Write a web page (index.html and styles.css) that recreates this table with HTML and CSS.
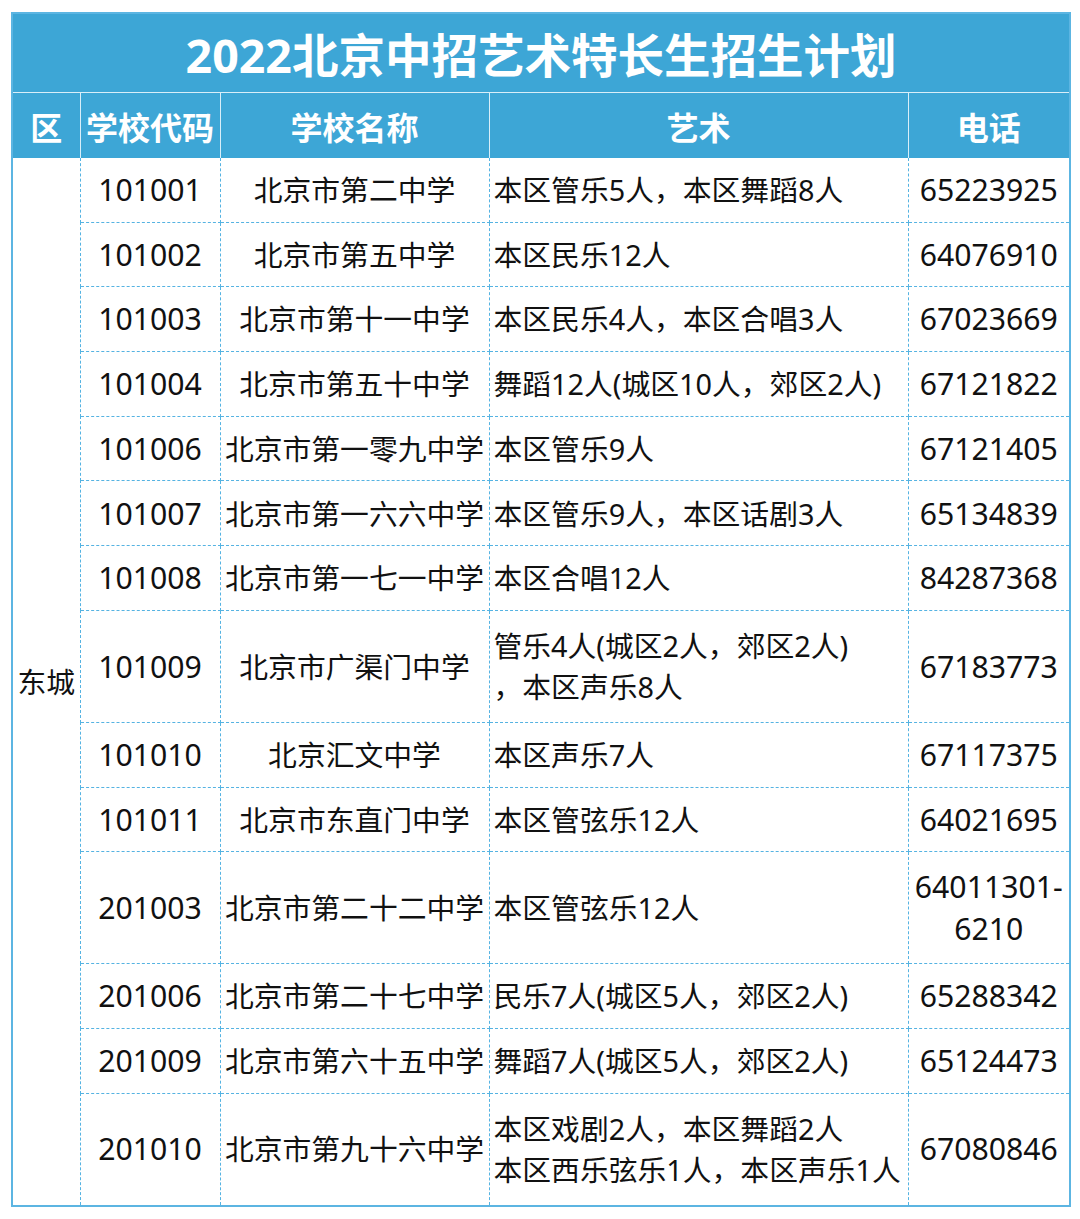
FILE: index.html
```html
<!DOCTYPE html>
<html lang="zh-CN">
<head>
<meta charset="utf-8">
<title>2022北京中招艺术特长生招生计划</title>
<link rel="stylesheet" href="styles.css">
</head>
<body>
<table class="plan">
  <colgroup>
    <col class="c-area">
    <col class="c-code">
    <col class="c-name">
    <col class="c-art">
    <col class="c-tel">
  </colgroup>
  <thead>
    <tr class="title-row"><th colspan="5" class="title">2022北京中招艺术特长生招生计划</th></tr>
    <tr class="head-row">
      <th>区</th>
      <th>学校代码</th>
      <th>学校名称</th>
      <th>艺术</th>
      <th>电话</th>
    </tr>
  </thead>
  <tbody>
    <tr class="r1">
      <td class="area" rowspan="14">东城</td>
      <td class="code">101001</td><td class="name">北京市第二中学</td><td class="art">本区管乐5人，本区舞蹈8人</td><td class="tel">65223925</td>
    </tr>
    <tr class="r1"><td class="code">101002</td><td class="name">北京市第五中学</td><td class="art">本区民乐12人</td><td class="tel">64076910</td></tr>
    <tr class="r1"><td class="code">101003</td><td class="name">北京市第十一中学</td><td class="art">本区民乐4人，本区合唱3人</td><td class="tel">67023669</td></tr>
    <tr class="r1"><td class="code">101004</td><td class="name">北京市第五十中学</td><td class="art">舞蹈12人(城区10人，郊区2人)</td><td class="tel">67121822</td></tr>
    <tr class="r1"><td class="code">101006</td><td class="name">北京市第一零九中学</td><td class="art">本区管乐9人</td><td class="tel">67121405</td></tr>
    <tr class="r1"><td class="code">101007</td><td class="name">北京市第一六六中学</td><td class="art">本区管乐9人，本区话剧3人</td><td class="tel">65134839</td></tr>
    <tr class="r1"><td class="code">101008</td><td class="name">北京市第一七一中学</td><td class="art">本区合唱12人</td><td class="tel">84287368</td></tr>
    <tr class="r2"><td class="code">101009</td><td class="name">北京市广渠门中学</td><td class="art">管乐4人(城区2人，郊区2人)<br>，本区声乐8人</td><td class="tel">67183773</td></tr>
    <tr class="r1"><td class="code">101010</td><td class="name">北京汇文中学</td><td class="art">本区声乐7人</td><td class="tel">67117375</td></tr>
    <tr class="r1"><td class="code">101011</td><td class="name">北京市东直门中学</td><td class="art">本区管弦乐12人</td><td class="tel">64021695</td></tr>
    <tr class="r2"><td class="code">201003</td><td class="name">北京市第二十二中学</td><td class="art">本区管弦乐12人</td><td class="tel">64011301-<br>6210</td></tr>
    <tr class="r1"><td class="code">201006</td><td class="name">北京市第二十七中学</td><td class="art">民乐7人(城区5人，郊区2人)</td><td class="tel">65288342</td></tr>
    <tr class="r1"><td class="code">201009</td><td class="name">北京市第六十五中学</td><td class="art">舞蹈7人(城区5人，郊区2人)</td><td class="tel">65124473</td></tr>
    <tr class="r2"><td class="code">201010</td><td class="name">北京市第九十六中学</td><td class="art">本区戏剧2人，本区舞蹈2人<br>本区西乐弦乐1人，本区声乐1人</td><td class="tel">67080846</td></tr>
  </tbody>
</table>
</body>
</html>
```

FILE: styles.css
```css
html, body {
  margin: 0;
  padding: 0;
  background: #ffffff;
}

body {
  font-family: "Noto Sans", "Noto Sans CJK SC", sans-serif;
  color: #111111;
}

.plan {
  margin: 12px 0 0 11px;
  width: 1058px;
  table-layout: fixed;
  border-collapse: collapse;
  border: 2px solid #5cb5e2;
}

.c-area { width: 68px; }
.c-code { width: 140px; }
.c-name { width: 269px; }
.c-art  { width: 419px; }
.c-tel  { width: 162px; }

.title-row th {
  height: 78px;
  padding: 0;
  background: #3da6d6;
  color: #ffffff;
  font-size: 46.5px;
  font-weight: 700;
  text-align: center;
  border-bottom: 1px solid #d9eef9;
}

.head-row th {
  height: 65px;
  padding: 0;
  background: #3da6d6;
  color: #ffffff;
  font-size: 32px;
  font-weight: 700;
  text-align: center;
  border-left: 1px solid #d9eef9;
  white-space: nowrap;
}

.head-row th:first-child {
  border-left: none;
}

tbody td {
  padding: 0;
  font-size: 28.8px;
  line-height: 41.5px;
  border: 1px dashed #55b3e2;
  vertical-align: middle;
  white-space: nowrap;
}

tbody tr.r1 td { height: 63.7px; }
tbody tr.r2 td { height: 111px; }

tbody tr:first-child td { border-top: none; }

.area {
  text-align: center;
  border-left: 2px solid #5cb5e2;
}

.code {
  text-align: center;
  font-size: 30.2px;
}

.name {
  text-align: center;
}

.art {
  text-align: left;
  padding-left: 4px;
}

.tel {
  text-align: center;
  font-size: 30.2px;
}
```
